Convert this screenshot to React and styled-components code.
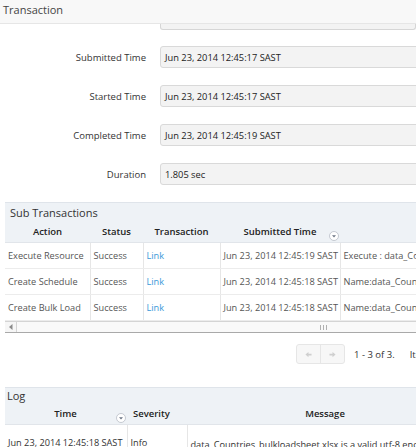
import React from 'react'
import styled, { createGlobalStyle } from 'styled-components'

const GlobalStyle = createGlobalStyle`
  html, body {
    margin: 0;
    padding: 0;
    background: #fff;
    font-family: "Open Sans", "Noto Sans", sans-serif;
    overflow: hidden;
  }
`

const fields = [
  { label: 'Submitted Time', value: 'Jun 23, 2014 12:45:17 SAST' },
  { label: 'Started Time', value: 'Jun 23, 2014 12:45:17 SAST' },
  { label: 'Completed Time', value: 'Jun 23, 2014 12:45:19 SAST' },
  { label: 'Duration', value: '1.805 sec' },
]

const subRows = [
  { action: 'Execute Resource', time: 'Jun 23, 2014 12:45:19 SAST', detail: 'Execute : data_Countries_bulkloadsheet.xlsx' },
  { action: 'Create Schedule', time: 'Jun 23, 2014 12:45:18 SAST', detail: 'Name:data_Countries_bulkloadsheet' },
  { action: 'Create Bulk Load', time: 'Jun 23, 2014 12:45:18 SAST', detail: 'Name:data_Countries_bulkloadsheet' },
]

const SortIcon = () => (
  <SortBadge>
    <svg width="10" height="10" viewBox="0 0 10 10">
      <circle cx="5" cy="5" r="4.5" fill="#fff" stroke="#b9bec6" strokeWidth="0.8" />
      <path d="M3 4.2 L7 4.2 L5 6.6 Z" fill="#6b7584" />
    </svg>
  </SortBadge>
)

const Arrow = ({ dir }) => (
  <svg width="7" height="7" viewBox="0 0 8 8">
    {dir === 'left'
      ? <path d="M0.5 4 L4 1 L4 3 L7.5 3 L7.5 5 L4 5 L4 7 Z" fill="#cfcfcf" />
      : <path d="M7.5 4 L4 1 L4 3 L0.5 3 L0.5 5 L4 5 L4 7 Z" fill="#cfcfcf" />}
  </svg>
)

const App = () => (
  <Page>
    <GlobalStyle />
    <TopBar>Transaction</TopBar>
    <FieldTail />
    <Form>
      {fields.map((f) => (
        <FieldRow key={f.label}>
          <Label>{f.label}</Label>
          <Input>{f.value}</Input>
        </FieldRow>
      ))}
    </Form>

    <Panel>
      <PanelTitle>Sub Transactions</PanelTitle>
      <Table $width={535}>
        <colgroup>
          <col style={{ width: 85 }} />
          <col style={{ width: 53 }} />
          <col style={{ width: 77 }} />
          <col style={{ width: 120 }} />
          <col style={{ width: 200 }} />
        </colgroup>
        <thead>
          <tr>
            <Th>Action</Th>
            <Th>Status</Th>
            <Th>Transaction</Th>
            <Th>Submitted Time<SortIcon /></Th>
            <Th>Details</Th>
          </tr>
        </thead>
        <tbody>
          {subRows.map((r) => (
            <tr key={r.action}>
              <Td>{r.action}</Td>
              <Td>Success</Td>
              <Td><LinkText>Link</LinkText></Td>
              <Td>{r.time}</Td>
              <Td>{r.detail}</Td>
            </tr>
          ))}
        </tbody>
      </Table>
      <HScroll>
        <ScrollButton>
          <svg width="4" height="6" viewBox="0 0 4 6"><path d="M3.5 0 L0 3 L3.5 6 Z" fill="#8a8a8a" /></svg>
        </ScrollButton>
        <ScrollThumb>
          <svg width="7" height="5" viewBox="0 0 7 5">
            <path d="M0.5 0 V5 M3.5 0 V5 M6.5 0 V5" stroke="#b0b0b0" strokeWidth="1" />
          </svg>
        </ScrollThumb>
      </HScroll>
    </Panel>

    <Pager>
      <PagerButtons>
        <PagerButton><Arrow dir="left" /></PagerButton>
        <PagerButton><Arrow dir="right" /></PagerButton>
      </PagerButtons>
      <PagerText>1 - 3 of 3.</PagerText>
      <PagerText>Items per page</PagerText>
    </Pager>

    <Panel $top={23}>
      <PanelTitle $short>Log</PanelTitle>
      <Table $width={458}>
        <colgroup>
          <col style={{ width: 122 }} />
          <col style={{ width: 60 }} />
          <col style={{ width: 276 }} />
        </colgroup>
        <thead>
          <tr>
            <Th $pad={1}>Time<SortIcon /></Th>
            <Th $left>Severity</Th>
            <Th>Message</Th>
          </tr>
        </thead>
        <tbody>
          <tr>
            <Td $tall $dark>Jun 23, 2014 12:45:18 SAST</Td>
            <Td $tall $dark>Info</Td>
            <Td $tall $dark $low>data_Countries_bulkloadsheet.xlsx is a valid utf-8 encoded file</Td>
          </tr>
        </tbody>
      </Table>
    </Panel>
  </Page>
)

const Page = styled.div`
  width: 416px;
  height: 447px;
  overflow: hidden;
`
const TopBar = styled.div`
  height: 24px;
  box-sizing: border-box;
  padding: 0 0 5px 3px;
  display: flex;
  align-items: center;
  background: #f8f8f8;
  border-bottom: 1px solid #e6e6e6;
  font-size: 11px;
  color: #444;
`
const FieldTail = styled.div`
  margin: 0 0 0 160px;
  height: 5px;
  background: #f3f3f3;
  border: 1px solid #d6d6d6;
  border-top: none;
  border-radius: 0 0 3px 3px;
`
const Form = styled.div`
  display: flex;
  flex-direction: column;
  gap: 17px;
  padding-top: 16px;
`
const FieldRow = styled.div`
  display: grid;
  grid-template-columns: 146px 300px;
  column-gap: 14px;
  align-items: center;
`
const Label = styled.div`
  text-align: right;
  font-size: 9.5px;
  color: #333;
`
const Input = styled.div`
  height: 22px;
  box-sizing: border-box;
  padding-left: 4px;
  display: flex;
  align-items: center;
  background: #f3f3f3;
  border: 1px solid #d9d9d9;
  border-radius: 3px;
  font-size: 9.3px;
  color: #222;
`
const Panel = styled.div`
  margin: ${(p) => p.$top ?? 17}px 0 0 5px;
  width: 700px;
  border-top: 1px solid #dfe4ea;
`
const PanelTitle = styled.div`
  height: ${(p) => (p.$short ? 15 : 18)}px;
  padding-left: ${(p) => (p.$short ? 2 : 5)}px;
  display: flex;
  align-items: center;
  background: #eef2f6;
  font-size: 11px;
  color: #333;
`
const Table = styled.table`
  width: ${(p) => p.$width}px;
  table-layout: fixed;
  border-collapse: collapse;
  font-size: 9.2px;
`
const Th = styled.th`
  position: relative;
  height: 21px;
  padding: 0 ${(p) => (p.$pad ? p.$pad : 0)}px 0 ${(p) => (p.$left ? 6 : 0)}px;
  text-align: ${(p) => (p.$left ? 'left' : 'center')};
  background: #eef2f6;
  border-bottom: 1px solid #e1e5ea;
  font-size: 9.5px;
  font-weight: 600;
  color: #222;
  white-space: nowrap;
  overflow: visible;
`
const SortBadge = styled.span`
  position: absolute;
  right: 1px;
  bottom: 1px;
  display: flex;
`
const Td = styled.td`
  height: ${(p) => (p.$tall ? 35 : 26)}px;
  box-sizing: border-box;
  padding: ${(p) => (p.$low ? '4px 0 0 3px' : '0 0 0 3px')};
  border-right: 1px solid #e6e6e6;
  border-bottom: 1px solid #ececec;
  color: ${(p) => (p.$dark ? '#333' : '#555')};
  white-space: nowrap;
  overflow: hidden;
`
const LinkText = styled.span`
  color: #3b9ad9;
`
const HScroll = styled.div`
  display: flex;
  height: 12px;
  box-sizing: border-box;
  background: #f1f1f1;
  border-top: 1px solid #d4d4d4;
  border-bottom: 1px solid #a9a9a9;
`
const ScrollButton = styled.div`
  width: 11px;
  flex-shrink: 0;
  display: flex;
  align-items: center;
  justify-content: center;
  border-right: 1px solid #d4d4d4;
  background: #f6f6f6;
`
const ScrollThumb = styled.div`
  width: 612px;
  flex-shrink: 0;
  display: flex;
  align-items: center;
  justify-content: center;
  background: #f9f9f9;
`
const Pager = styled.div`
  display: flex;
  align-items: center;
  gap: 9px;
  margin-top: 11px;
  padding-left: 296px;
  white-space: nowrap;
`
const PagerButtons = styled.div`
  display: flex;
  height: 20px;
  box-sizing: border-box;
  border: 1px solid #e6e6e6;
  border-radius: 3px;
  background: #f7f7f7;
`
const PagerButton = styled.div`
  width: 23px;
  display: flex;
  align-items: center;
  justify-content: center;
  & + & {
    border-left: 1px solid #e6e6e6;
  }
`
const PagerText = styled.span`
  font-size: 9.5px;
  color: #333;
  & + & {
    margin-left: 6px;
  }
`

export default App
